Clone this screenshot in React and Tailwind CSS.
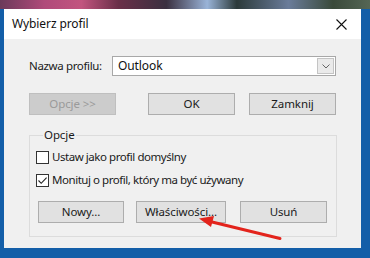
import React from 'react';

const font = { fontFamily: '"Noto Sans", "Open Sans", sans-serif' };

const Btn = ({ children, w, disabled }) => (
  <div
    className={
      'flex h-[22px] items-center justify-center border text-[11.5px] tracking-[-0.1px] ' +
      (disabled
        ? 'border-[#bfbfbf] bg-[#cccccc] text-[#9a9a9a]'
        : 'border-[#adadad] bg-[#e1e1e1] text-[#1a1a1a]')
    }
    style={{ width: w }}
  >
    {children}
  </div>
);

const Check = ({ checked, label }) => (
  <div className="flex h-[16px] items-center gap-[3px]">
    <div className="flex h-[13px] w-[13px] items-center justify-center border border-[#333333] bg-white">
      {checked && (
        <svg width="11" height="11" viewBox="0 0 11 11">
          <path d="M1.5 5.5 L4.2 8.3 L9.6 2.6" fill="none" stroke="#222" strokeWidth="1.1" />
        </svg>
      )}
    </div>
    <span className="text-[11.5px] tracking-[-0.45px] text-[#1a1a1a]">{label}</span>
  </div>
);

export default function App() {
  return (
    <div className="relative flex h-[258px] w-[370px] flex-col overflow-hidden bg-[#135ea8]" style={font}>
      <div className="h-[9px] bg-[linear-gradient(90deg,#6b3a5a_0%,#b04a7a_12%,#c2557f_22%,#6a2f48_32%,#3a3040_45%,#9ab4d8_56%,#2c3a3a_64%,#6a7c9a_78%,#3a4a3a_90%,#556655_100%)]" />
      <div className="flex pl-[4px]">
        <div className="flex h-[239px] w-[357px] flex-col bg-[#f0f0f0]">
          <div className="flex h-[30px] items-center justify-between bg-white pl-[8px] pr-[14px]">
            <span className="text-[12px] tracking-[-0.1px] text-[#111]">Wybierz profil</span>
            <svg width="11" height="11" viewBox="0 0 11 11">
              <path d="M0.5 0.5 L10.5 10.5 M10.5 0.5 L0.5 10.5" stroke="#111" strokeWidth="1.1" />
            </svg>
          </div>
          <div className="flex flex-col px-[25px]">
            <div className="mt-[17px] flex h-[20px] items-center">
              <span className="w-[83px] text-[11.5px] tracking-[-0.35px] text-[#1a1a1a]">Nazwa profilu:</span>
              <div className="flex h-[20px] w-[224px] items-center justify-between border border-[#a8a8a8] bg-white pl-[5px] pr-px">
                <span className="text-[12px] tracking-[-0.1px] text-[#111]">Outlook</span>
                <div className="flex h-[16px] w-[17px] items-center justify-center border border-[#c4c4c4] bg-[#eaeaea]">
                  <svg width="8" height="5" viewBox="0 0 8 5">
                    <path d="M0.5 0.5 L4 4 L7.5 0.5" fill="none" stroke="#666" strokeWidth="1" />
                  </svg>
                </div>
              </div>
            </div>
            <div className="mt-[17px] flex items-center">
              <Btn w={87} disabled>Opcje &gt;&gt;</Btn>
              <div className="ml-[32px]"><Btn w={87}>OK</Btn></div>
              <div className="ml-[14px]"><Btn w={87}>Zamknij</Btn></div>
            </div>
            <fieldset className="mt-[12px] w-[308px] border border-[#dcdcdc] pb-[13px] pl-[6px]">
              <legend className="ml-[7px] px-[1px] text-[11.5px] leading-[16px] tracking-[-0.1px] text-[#1a1a1a]">Opcje</legend>
              <div className="mt-[6px]">
                <Check label="Ustaw jako profil domyślny" />
              </div>
              <div className="mt-[7px]">
                <Check checked label="Monituj o profil, który ma być używany" />
              </div>
              <div className="ml-[2px] mt-[13px] flex items-center">
                <Btn w={86}>Nowy...</Btn>
                <div className="ml-[12px]"><Btn w={90}>Właściwości...</Btn></div>
                <div className="ml-[14px]"><Btn w={87}>Usuń</Btn></div>
              </div>
            </fieldset>
          </div>
        </div>
      </div>
      <svg className="pointer-events-none absolute left-0 top-0" width="370" height="258" viewBox="0 0 370 258">
        <path d="M280 238.5 L210 221.5" stroke="#e3241c" strokeWidth="3" strokeLinecap="round" />
        <path d="M199 218.5 L214 216 L211 227 Z" fill="#e3241c" />
      </svg>
    </div>
  );
}
